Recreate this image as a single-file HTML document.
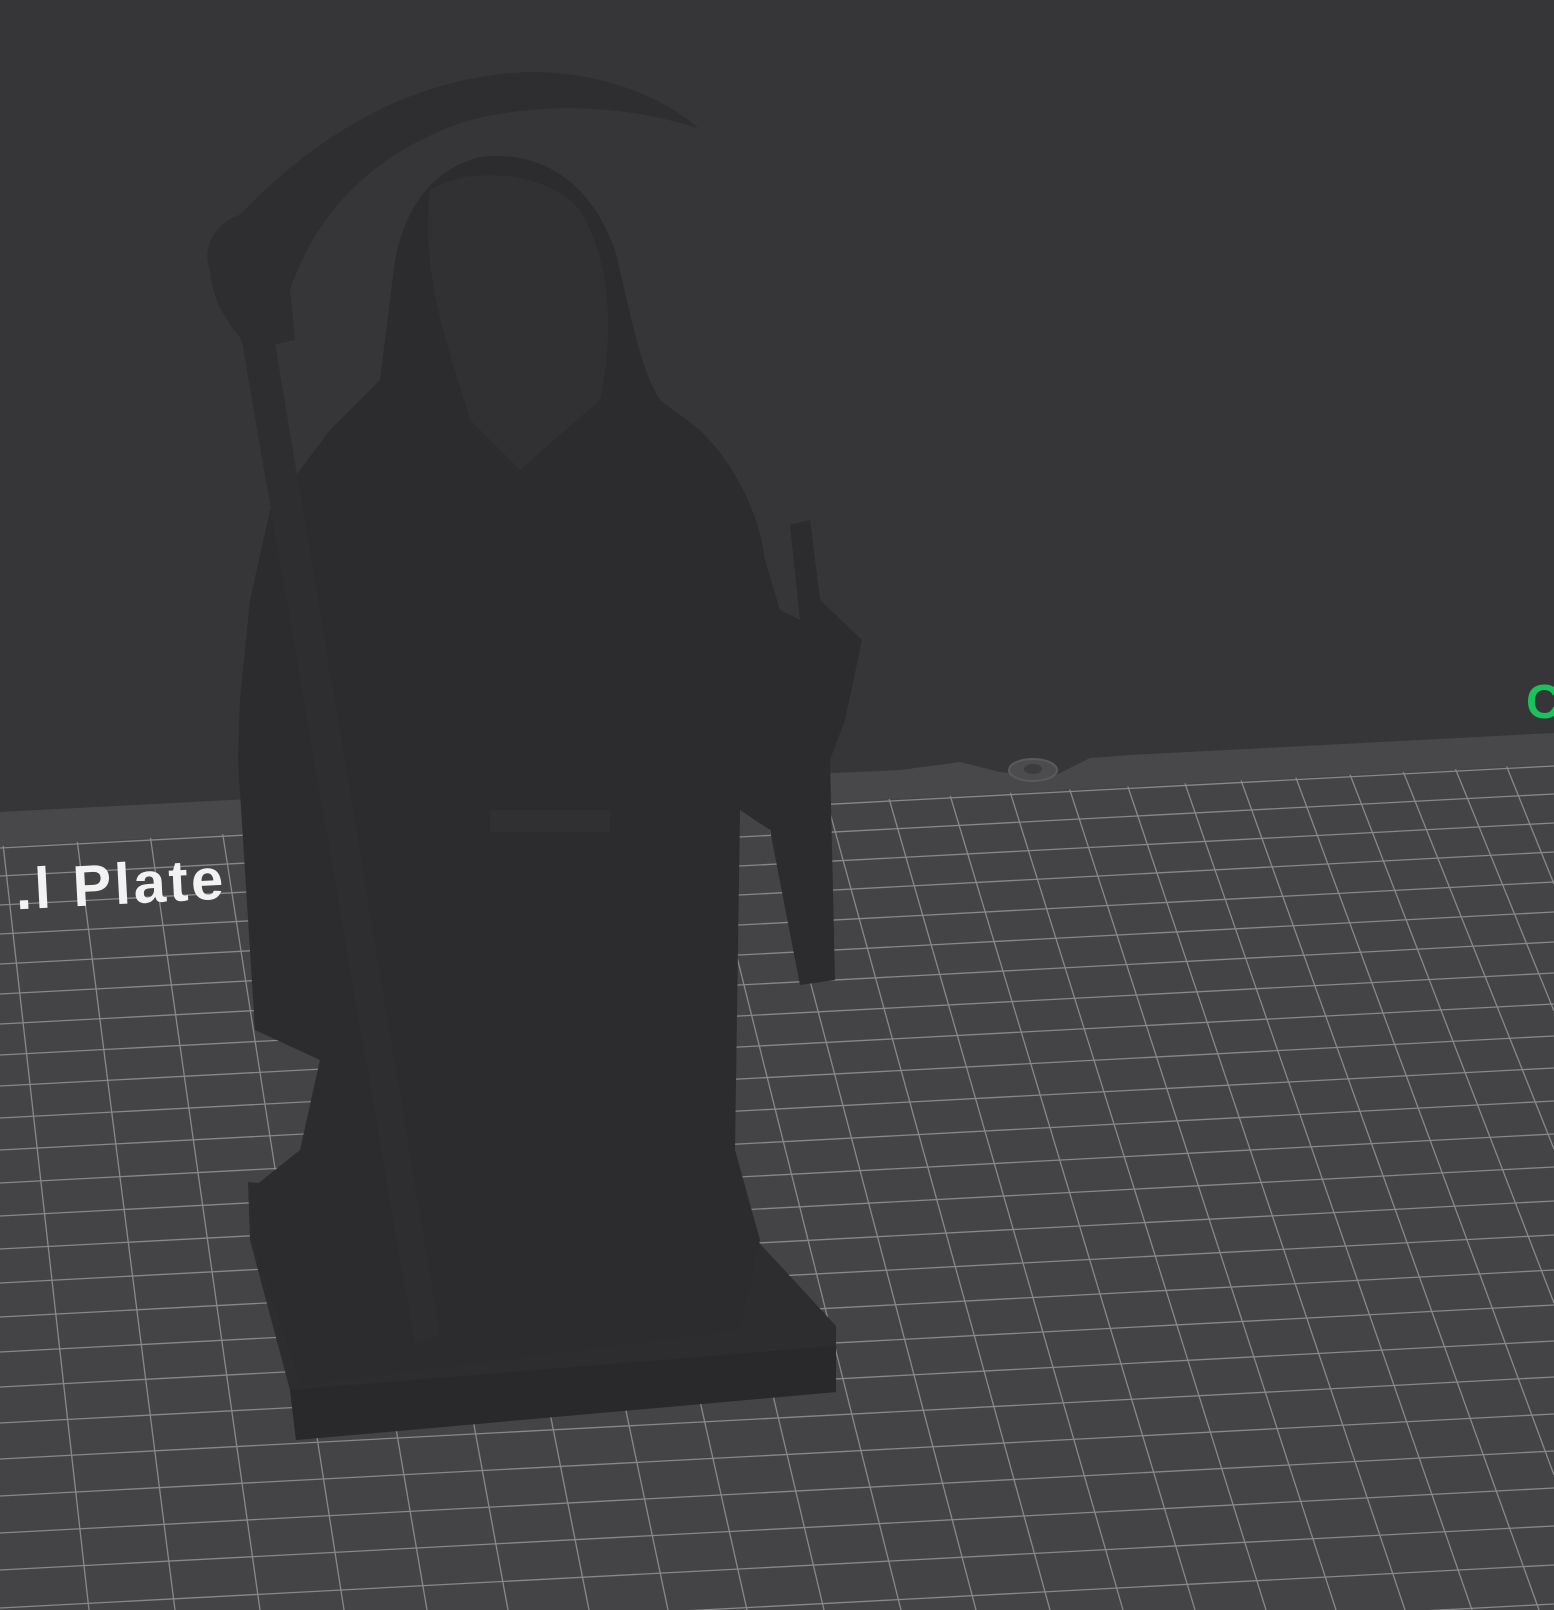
<!DOCTYPE html>
<html><head><meta charset="utf-8"><style>
html,body{margin:0;padding:0;background:#363639;overflow:hidden;width:1554px;height:1610px}
svg{display:block;overflow:hidden}
</style></head><body>
<svg width="1554" height="1610" viewBox="0 0 1554 1610" xmlns="http://www.w3.org/2000/svg">
<defs>
<clipPath id="plate"><polygon points="0,846 1554,764 1554,1610 0,1610"/></clipPath>
</defs>
<rect width="1554" height="1610" fill="#363639"/>
<polygon points="0,812 230,800 900,770 960,762 1000,772 1050,778 1090,758 1130,755 1554,733 1554,1610 0,1610" fill="#48484b"/>
<polygon points="0,846 1554,764 1554,1610 0,1610" fill="#444447"/>
<g clip-path="url(#plate)" stroke="#88888a" stroke-width="1.3" fill="none">
<line x1="0" y1="848" x2="1554" y2="766"/>
<line x1="0" y1="876" x2="1554" y2="794"/>
<line x1="0" y1="905" x2="1554" y2="823"/>
<line x1="0" y1="934" x2="1554" y2="852"/>
<line x1="0" y1="964" x2="1554" y2="882"/>
<line x1="0" y1="994" x2="1554" y2="912"/>
<line x1="0" y1="1024" x2="1554" y2="942"/>
<line x1="0" y1="1055" x2="1554" y2="973"/>
<line x1="0" y1="1086" x2="1554" y2="1004"/>
<line x1="0" y1="1118" x2="1554" y2="1036"/>
<line x1="0" y1="1150" x2="1554" y2="1068"/>
<line x1="0" y1="1183" x2="1554" y2="1101"/>
<line x1="0" y1="1216" x2="1554" y2="1134"/>
<line x1="0" y1="1249" x2="1554" y2="1167"/>
<line x1="0" y1="1283" x2="1554" y2="1201"/>
<line x1="0" y1="1317" x2="1554" y2="1235"/>
<line x1="0" y1="1352" x2="1554" y2="1270"/>
<line x1="0" y1="1387" x2="1554" y2="1305"/>
<line x1="0" y1="1423" x2="1554" y2="1341"/>
<line x1="0" y1="1459" x2="1554" y2="1377"/>
<line x1="0" y1="1496" x2="1554" y2="1414"/>
<line x1="0" y1="1533" x2="1554" y2="1451"/>
<line x1="0" y1="1570" x2="1554" y2="1488"/>
<line x1="0" y1="1608" x2="1554" y2="1526"/>
<line x1="0" y1="1647" x2="1554" y2="1565"/>
<line x1="0" y1="1686" x2="1554" y2="1604"/>
<line x1="2" y1="835" x2="89" y2="1610"/>
<line x1="76" y1="831" x2="175" y2="1610"/>
<line x1="149" y1="827" x2="260" y2="1610"/>
<line x1="221" y1="823" x2="344" y2="1610"/>
<line x1="292" y1="820" x2="427" y2="1610"/>
<line x1="362" y1="816" x2="508" y2="1610"/>
<line x1="431" y1="812" x2="589" y2="1610"/>
<line x1="499" y1="809" x2="668" y2="1610"/>
<line x1="566" y1="805" x2="747" y2="1610"/>
<line x1="632" y1="802" x2="824" y2="1610"/>
<line x1="697" y1="798" x2="901" y2="1610"/>
<line x1="761" y1="795" x2="976" y2="1610"/>
<line x1="824" y1="791" x2="1050" y2="1610"/>
<line x1="886" y1="788" x2="1123" y2="1610"/>
<line x1="947" y1="785" x2="1195" y2="1610"/>
<line x1="1007" y1="782" x2="1266" y2="1610"/>
<line x1="1066" y1="778" x2="1336" y2="1610"/>
<line x1="1124" y1="775" x2="1405" y2="1610"/>
<line x1="1181" y1="772" x2="1472" y2="1610"/>
<line x1="1237" y1="769" x2="1539" y2="1610"/>
<line x1="1292" y1="767" x2="1554" y2="1475"/>
<line x1="1346" y1="764" x2="1554" y2="1303"/>
<line x1="1399" y1="761" x2="1554" y2="1149"/>
<line x1="1451" y1="758" x2="1554" y2="1011"/>
<line x1="1502" y1="755" x2="1554" y2="884"/>
</g>
<ellipse cx="1033" cy="770" rx="24" ry="11" fill="#4c4c4f" stroke="#5a5a5d" stroke-width="2"/>
<ellipse cx="1033" cy="769" rx="9" ry="5" fill="#3c3c3f"/>
<text x="15" y="905" transform="rotate(-3 100 880)" font-family="Liberation Sans, sans-serif" font-weight="bold" font-size="58" letter-spacing="3" fill="#f2f2f2">.l Plate</text>
<text x="1526" y="718" font-family="Liberation Sans, sans-serif" font-weight="bold" font-size="48" fill="#19c25a">C</text>
<g fill="#2c2c2e">
<polygon points="248,1182 740,1222 836,1326 836,1392 296,1440 290,1390 250,1240" fill="#2d2d2f"/>
<polygon points="290,1390 836,1346 836,1392 296,1440" fill="#29292b"/>
<path d="M480,157 C540,150 590,180 615,250 C630,310 640,370 660,400 L700,430 C740,470 760,520 765,560 L780,610 L800,620 L790,525 L810,520 L820,600 L862,640 L845,720 L830,760 L835,980 L800,985 L770,830 L740,810 L735,1150 L760,1240 L740,1330 L300,1385 L255,1250 L250,1190 L300,1150 L320,1060 L255,1030 L238,760 L240,700 L250,600 L270,510 L330,430 L380,380 L395,260 C405,210 430,170 480,157 Z"/>
<polygon points="240,330 272,325 440,1335 415,1345" fill="#2e2e30"/>
<path d="M210,270 C200,245 220,220 240,215 C330,120 430,75 530,72 C600,72 660,95 698,128 C640,110 560,98 470,120 C390,145 320,200 290,290 L295,340 L250,350 C225,320 212,300 210,270 Z" fill="#2e2e30"/>
<path d="M430,190 C460,170 540,165 580,210 C610,260 615,330 600,400 L520,470 L470,420 C450,350 420,280 430,190 Z" fill="#313133"/>
<rect x="490" y="810" width="120" height="22" fill="#303032"/>
</g>
</svg>
</body></html>
